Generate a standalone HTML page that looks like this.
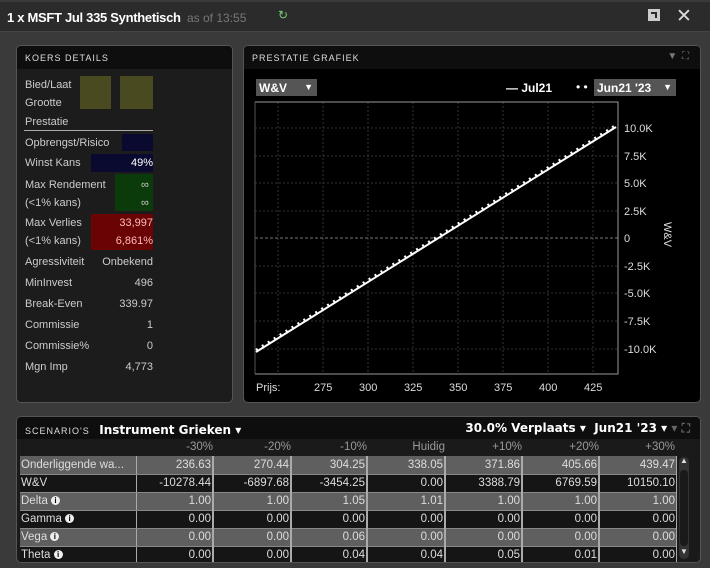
<!DOCTYPE html>
<html><head><meta charset="utf-8"><style>
*{margin:0;padding:0;box-sizing:border-box}
body{width:710px;height:568px;background:#3a3a3a;font-family:"Liberation Sans",sans-serif;color:#ccc;font-size:11px;position:relative;overflow:hidden}
.a{position:absolute;white-space:nowrap}
.panel{position:absolute;border:1px solid #555;border-radius:5px;overflow:hidden}
.hdr{position:absolute;left:0;right:0;top:0;height:23px;background:#0e0e0e;font-size:9px;letter-spacing:1px;color:#ddd;padding:7px 8px}
.r{text-align:right}
table{border-collapse:collapse;table-layout:fixed;font-size:11.5px}
td{height:18px;padding:0 1px;text-align:right;border-right:2px solid #aaa;border-bottom:1px solid #888;color:#ddd;overflow:hidden;white-space:nowrap}
td:first-child{text-align:left;border-right:1px solid #aaa}
tr.g td{background:#5f5f5f}
tr.b td{background:#151515}
.i{display:inline-block;width:9px;height:9px;border-radius:50%;background:#eee;color:#000;font-size:8px;text-align:center;line-height:9px;font-weight:bold;vertical-align:middle}
</style></head><body>
<div class="a" style="left:0;top:2px;width:710px;height:30px;background:#2b2b2b;border-bottom:1px solid #444"></div>
<div class="a" style="left:7px;top:10px;font-size:13px;font-weight:bold;color:#fff;letter-spacing:-0.3px">1 x MSFT Jul 335 Synthetisch <span style="font-weight:normal;color:#777;font-size:12px;margin-left:3px;letter-spacing:0">as of 13:55</span></div>
<div class="a" style="left:278px;top:8px;color:#7c7;font-size:12px">↻</div>
<div class="a" style="left:648px;top:9px;width:12px;height:12px;background:#ccc"></div>
<div class="a" style="left:651px;top:12px;width:6px;height:6px;border-right:2px solid #2b2b2b;border-top:2px solid #2b2b2b"></div>
<div class="a" style="left:676px;top:5px;font-size:19px;color:#ddd">✕</div>

<div class="panel" style="left:16px;top:45px;width:217px;height:358px;background:#1c1c1c">
<div class="hdr">KOERS DETAILS</div></div>
<div class="a" style="left:80px;top:76px;width:31px;height:33px;background:#4a4a20"></div>
<div class="a" style="left:120px;top:76px;width:33px;height:33px;background:#4a4a20"></div>
<div class="a" style="left:122px;top:134px;width:31px;height:17px;background:#0a0a30"></div>
<div class="a" style="left:91px;top:154px;width:62px;height:18px;background:#0a0a30"></div>
<div class="a" style="left:115px;top:174px;width:38px;height:37px;background:#0b3a0b"></div>
<div class="a" style="left:91px;top:214px;width:62px;height:36px;background:#6a0303"></div>
<div class="a" style="left:24px;top:130px;width:129px;height:1px;background:#aaa"></div>
<div class="a" style="left:25px;top:79px">Bied/Laat</div>
<div class="a" style="left:25px;top:97px">Grootte</div>
<div class="a" style="left:25px;top:116px">Prestatie</div>
<div class="a" style="left:25px;top:137px">Opbrengst/Risico</div>
<div class="a" style="left:25px;top:157px">Winst Kans</div><div class="a r" style="right:557px;top:157px;color:#fff">49%</div>
<div class="a" style="left:25px;top:179px">Max Rendement</div><div class="a" style="left:141px;top:179px">∞</div>
<div class="a" style="left:25px;top:197px">(&lt;1% kans)</div><div class="a" style="left:141px;top:197px">∞</div>
<div class="a" style="left:25px;top:217px">Max Verlies</div><div class="a" style="right:557px;top:217px;color:#fbb">33,997</div>
<div class="a" style="left:25px;top:235px">(&lt;1% kans)</div><div class="a" style="right:557px;top:235px;color:#fbb">6,861%</div>
<div class="a" style="left:25px;top:256px">Agressiviteit</div><div class="a" style="right:557px;top:256px">Onbekend</div>
<div class="a" style="left:25px;top:277px">MinInvest</div><div class="a" style="right:557px;top:277px">496</div>
<div class="a" style="left:25px;top:298px">Break-Even</div><div class="a" style="right:557px;top:298px">339.97</div>
<div class="a" style="left:25px;top:319px">Commissie</div><div class="a" style="right:557px;top:319px">1</div>
<div class="a" style="left:25px;top:340px">Commissie%</div><div class="a" style="right:557px;top:340px">0</div>
<div class="a" style="left:25px;top:361px">Mgn Imp</div><div class="a" style="right:557px;top:361px">4,773</div>

<div class="panel" style="left:243px;top:45px;width:458px;height:358px;background:#000">
<div class="hdr">PRESTATIE GRAFIEK<span style="position:absolute;right:10px;top:5px;color:#777;font-size:10px">▼ ⛶</span></div></div>
<div class="a" style="left:256px;top:79px;width:61px;height:17px;background:#555;color:#fff;font-weight:bold;font-size:12px;padding:2px 3px">W&amp;V<span style="position:absolute;right:4px;font-size:9px;top:3px">▼</span></div>
<div class="a" style="left:506px;top:81px;color:#fff;font-weight:bold;font-size:12px">— Jul21</div>
<div class="a" style="left:576px;top:80px;color:#fff;font-size:12px">• •</div>
<div class="a" style="left:594px;top:79px;width:82px;height:17px;background:#555;color:#fff;font-weight:bold;font-size:12px;padding:2px 3px">Jun21 '23<span style="position:absolute;right:4px;font-size:9px;top:3px">▼</span></div>
<svg class="a" style="left:0;top:0" width="710" height="568">
<g stroke="#333" stroke-dasharray="2,2" stroke-width="1">
<line x1="278" y1="102" x2="278" y2="374"/><line x1="323" y1="102" x2="323" y2="374"/><line x1="368" y1="102" x2="368" y2="374"/><line x1="413" y1="102" x2="413" y2="374"/><line x1="458" y1="102" x2="458" y2="374"/><line x1="503" y1="102" x2="503" y2="374"/><line x1="548" y1="102" x2="548" y2="374"/><line x1="593" y1="102" x2="593" y2="374"/>
<line x1="255" y1="128" x2="618" y2="128"/><line x1="255" y1="156" x2="618" y2="156"/><line x1="255" y1="183" x2="618" y2="183"/><line x1="255" y1="211" x2="618" y2="211"/><line x1="255" y1="266" x2="618" y2="266"/><line x1="255" y1="293" x2="618" y2="293"/><line x1="255" y1="321" x2="618" y2="321"/><line x1="255" y1="349" x2="618" y2="349"/>
</g>
<line x1="255" y1="238" x2="618" y2="238" stroke="#777" stroke-dasharray="3,2"/>
<polyline points="255,102 618,102 618,374 255,374" fill="none" stroke="#999"/>
<line x1="255" y1="102" x2="255" y2="374" stroke="#555"/>
<line x1="256" y1="352" x2="616" y2="127" stroke="#fff" stroke-width="2"/>
<line x1="256" y1="350" x2="616" y2="125" stroke="#fff" stroke-width="2.5" stroke-dasharray="2,5"/>
<g fill="#ddd" font-size="11" font-family="Liberation Sans">
<text x="624" y="132">10.0K</text><text x="624" y="160">7.5K</text><text x="624" y="187">5.0K</text><text x="624" y="215">2.5K</text><text x="624" y="242">0</text><text x="624" y="270">-2.5K</text><text x="624" y="297">-5.0K</text><text x="624" y="325">-7.5K</text><text x="624" y="353">-10.0K</text>
<text x="256" y="391">Prijs:</text><text x="314" y="391">275</text><text x="359" y="391">300</text><text x="404" y="391">325</text><text x="449" y="391">350</text><text x="494" y="391">375</text><text x="539" y="391">400</text><text x="584" y="391">425</text>
<text x="664" y="222" transform="rotate(90 664 222)">W&amp;V</text>
</g></svg>

<div class="panel" style="left:16px;top:416px;width:685px;height:147px;background:#1a1a1a">
<div class="hdr" style="height:22px;padding-top:6px">SCENARIO'S <span style="letter-spacing:0;font-size:12px;font-weight:bold;font-family:'DejaVu Sans',sans-serif;margin-left:6px;color:#fff">Instrument Grieken ▾</span>
<span style="position:absolute;right:10px;top:4px;letter-spacing:0;font-size:12px;font-weight:bold;font-family:'DejaVu Sans',sans-serif;color:#fff">30.0% Verplaats ▾ &nbsp;Jun21 '23 ▾ <span style="color:#666">▾ ⛶</span></span></div></div>
<div class="a" style="left:20px;top:441px;width:657px;height:14px;font-size:11.5px;color:#999">
<span class="a" style="right:464px">-30%</span><span class="a" style="right:386px">-20%</span><span class="a" style="right:310px">-10%</span><span class="a" style="right:232px">Huidig</span><span class="a" style="right:155px">+10%</span><span class="a" style="right:78px">+20%</span><span class="a" style="right:2px">+30%</span></div>
<div class="a" style="left:20px;top:456px;width:657px;height:106px;overflow:hidden">
<table style="width:657px">
<colgroup><col style="width:116px"><col style="width:77px"><col style="width:78px"><col style="width:76px"><col style="width:78px"><col style="width:77px"><col style="width:77px"><col style="width:78px"></colgroup>
<tr class="g"><td>Onderliggende wa...</td><td>236.63</td><td>270.44</td><td>304.25</td><td>338.05</td><td>371.86</td><td>405.66</td><td>439.47</td></tr>
<tr class="b"><td>W&amp;V</td><td>-10278.44</td><td>-6897.68</td><td>-3454.25</td><td>0.00</td><td>3388.79</td><td>6769.59</td><td>10150.10</td></tr>
<tr class="g"><td>Delta <span class="i">i</span></td><td>1.00</td><td>1.00</td><td>1.05</td><td>1.01</td><td>1.00</td><td>1.00</td><td>1.00</td></tr>
<tr class="b"><td>Gamma <span class="i">i</span></td><td>0.00</td><td>0.00</td><td>0.00</td><td>0.00</td><td>0.00</td><td>0.00</td><td>0.00</td></tr>
<tr class="g"><td>Vega <span class="i">i</span></td><td>0.00</td><td>0.00</td><td>0.06</td><td>0.00</td><td>0.00</td><td>0.00</td><td>0.00</td></tr>
<tr class="b"><td>Theta <span class="i">i</span></td><td>0.00</td><td>0.00</td><td>0.04</td><td>0.04</td><td>0.05</td><td>0.01</td><td>0.00</td></tr>
</table></div>
<div class="a" style="left:679px;top:457px;width:10px;height:102px;background:#333;border-radius:5px"></div>
<div class="a" style="left:680px;top:470px;width:8px;height:76px;background:#1a1a1a;border-radius:4px"></div>
<div class="a" style="left:680px;top:456px;font-size:8px;color:#ddd">▲</div>
<div class="a" style="left:680px;top:547px;font-size:8px;color:#ddd">▼</div>
</body></html>
